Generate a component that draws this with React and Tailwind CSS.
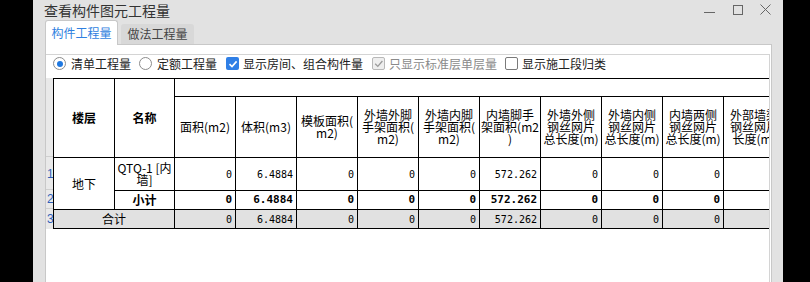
import React from "react";

const heads = [
  ["面积(m2)"],
  ["体积(m3)"],
  ["模板面积(", "m2)"],
  ["外墙外脚", "手架面积(", "m2)"],
  ["外墙内脚", "手架面积(", "m2)"],
  ["内墙脚手", "架面积(m2", ")"],
  ["外墙外侧", "钢丝网片", "总长度(m)"],
  ["外墙内侧", "钢丝网片", "总长度(m)"],
  ["内墙两侧", "钢丝网片", "总长度(m)"],
  ["外部墙梁", "钢丝网片", "长度(m)"],
];

const values = ["0", "6.4884", "0", "0", "0", "572.262", "0", "0", "0", "0"];

const cell = "border-r border-b border-black";
const num =
  "flex items-center justify-end pr-[3px] font-['DejaVu_Sans_Mono',monospace] text-[10px]";

const Radio = ({ checked }) => (
  <div className="w-[13px] h-[13px] rounded-full border border-[#8c8c8c] bg-white flex items-center justify-center">
    {checked && <div className="w-[6px] h-[6px] rounded-full bg-[#1f78e0]" />}
  </div>
);

const Check = ({ state }) => {
  if (state === "on")
    return (
      <div className="w-[13px] h-[13px] rounded-[2px] bg-[#2f7fe6] flex items-center justify-center">
        <svg width="10" height="10" viewBox="0 0 10 10" fill="none">
          <path d="M1.5 5.2 L4 7.6 L8.6 2.4" stroke="#fff" strokeWidth="1.6" />
        </svg>
      </div>
    );
  if (state === "disabled")
    return (
      <div className="w-[13px] h-[13px] rounded-[2px] border border-[#b8b8b8] bg-[#eeeeee] flex items-center justify-center">
        <svg width="10" height="10" viewBox="0 0 10 10" fill="none">
          <path d="M1.2 4.8 L3.8 7.4 L8.4 2" stroke="#9a9a9a" strokeWidth="1.3" />
        </svg>
      </div>
    );
  return <div className="w-[13px] h-[13px] rounded-[2px] border border-[#7a7a7a] bg-white" />;
};

const Header = ({ lines }) => (
  <div className={`${cell} flex flex-col items-center justify-center text-center leading-[12px] overflow-hidden`}>
    {lines.map((l, i) => (
      <span key={i} className="whitespace-nowrap">{l}</span>
    ))}
  </div>
);

const ValueRow = ({ bold, gray }) =>
  values.map((v, i) => (
    <div
      key={i}
      className={`${cell} ${num} ${bold ? "font-bold text-[11px]" : ""} ${gray ? "bg-[#e1e1e1]" : ""}`}
    >
      {v}
    </div>
  ));

const App = () => {
  return (
    <div className="w-[810px] h-[282px] bg-black flex overflow-hidden font-['Noto_Sans_CJK_SC',sans-serif]">
      <div className="ml-[33px] w-[750px] h-full bg-[#e2e2e2] flex flex-col">
        {/* title bar */}
        <div className="h-[20px] flex items-center pl-[11px] pr-[12px]">
          <span className="text-[14px] leading-[20px] text-[#333]">查看构件图元工程量</span>
          <div className="ml-auto flex items-start h-[20px]">
            <div className="w-[11px] h-px bg-[#666] mt-[12px]" />
            <div className="w-[10px] h-[10px] border border-[#666] ml-[18px] mt-[5px]" />
            <svg width="11" height="11" viewBox="0 0 11 11" className="ml-[17px] mt-[4px]">
              <path d="M0.5 0.5 L10.5 10.5 M10.5 0.5 L0.5 10.5" stroke="#666" strokeWidth="1" />
            </svg>
          </div>
        </div>

        {/* tabs */}
        <div className="h-[24px] flex items-end pl-[12px]">
          <div className="relative z-10 -mb-px w-[73px] h-[25px] bg-white border border-b-0 border-[#c8c8c8] rounded-t-[3px] flex items-center justify-center text-[12px] text-[#2f7fe0]">
            构件工程量
          </div>
          <div className="ml-[3px] w-[73px] h-[20px] bg-[#d8d8d8] rounded-t-[3px] flex items-center justify-center text-[12px] text-[#444]">
            做法工程量
          </div>
        </div>

        {/* panel */}
        <div className="ml-[12px] w-[727px] flex-1 bg-white border border-b-0 border-[#c8c8c8] pt-[9px] flex flex-col">
          <div className="mr-px flex-1 border-t border-r border-[#d4d4d4] overflow-hidden">
            <div className="h-[23px] flex items-start pt-[2px] pl-[7px] text-[12px] leading-[13px] text-[#222]">
              <div className="flex items-center gap-[5px]">
                <Radio checked />
                <span>清单工程量</span>
              </div>
              <div className="flex items-center gap-[5px] ml-[8px]">
                <Radio />
                <span>定额工程量</span>
              </div>
              <div className="flex items-center gap-[4px] ml-[9px]">
                <Check state="on" />
                <span>显示房间、组合构件量</span>
              </div>
              <div className="flex items-center gap-[4px] ml-[9px] text-[#8a8a8a]">
                <Check state="disabled" />
                <span>只显示标准层单层量</span>
              </div>
              <div className="flex items-center gap-[4px] ml-[8px]">
                <Check />
                <span>显示施工段归类</span>
              </div>
            </div>

            <div className="flex">
              <div className="w-[7px] shrink-0 flex flex-col bg-[#e9e9e9] text-[12px] leading-none text-[#2f5fb8] font-['Liberation_Sans',sans-serif]">
                <div className="h-[79px] border-b border-[#cfcfcf]" />
                <div className="h-[33px] border-b border-[#cfcfcf] flex items-end pb-[9px] pl-px">1</div>
                <div className="h-[19px] border-b border-[#cfcfcf] flex items-center pl-px">2</div>
                <div className="h-[19px] flex items-center pl-px">3</div>
              </div>

              <div className="shrink-0 grid grid-cols-[61px_60px_repeat(10,61px)] grid-rows-[18px_61px_33px_19px_19px] border-t border-l border-black text-[12px] text-black">
                <div className={`${cell} row-span-2 flex items-center justify-center font-bold`}>楼层</div>
                <div className={`${cell} row-span-2 flex items-center justify-center font-bold`}>名称</div>
                <div className={`${cell} col-span-10`} />
                {heads.map((h, i) => (
                  <Header key={i} lines={h} />
                ))}

                <div className={`${cell} row-span-2 flex items-center justify-center`}>地下</div>
                <div className={`${cell} flex flex-col items-center justify-center leading-[12px]`}>
                  <span>QTQ-1 [内</span>
                  <span>墙]</span>
                </div>
                <ValueRow />

                <div className={`${cell} flex items-center justify-center font-bold`}>小计</div>
                <ValueRow bold />

                <div className={`${cell} col-span-2 flex items-center justify-center bg-[#e1e1e1]`}>合计</div>
                <ValueRow gray />
              </div>
            </div>
          </div>
        </div>
      </div>
    </div>
  );
};

export default App;
